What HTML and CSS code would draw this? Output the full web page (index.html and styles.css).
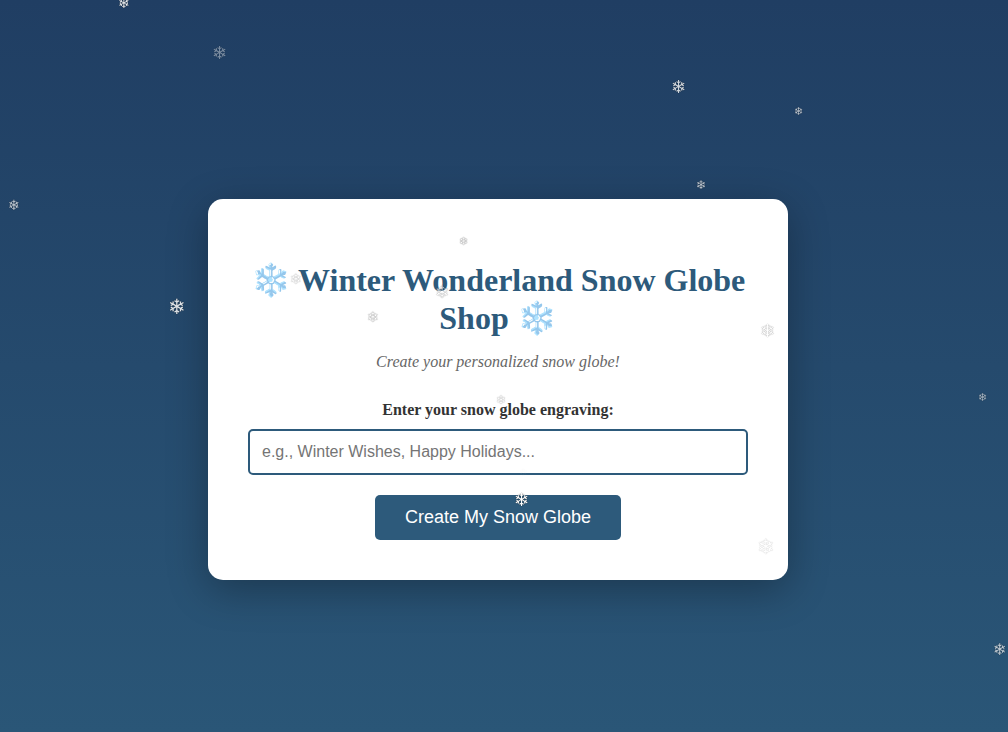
FILE: index.html
```html
<!DOCTYPE html>
<html lang="en">
<head>
<meta charset="utf-8">
<title>Winter Wonderland Snow Globe Shop</title>
<link rel="stylesheet" href="styles.css">
</head>
<body>
<main class="card">
<h1 class="title">❄️ Winter Wonderland Snow Globe Shop ❄️</h1>
<p class="subtitle">Create your personalized snow globe!</p>
<form class="form">
<label class="label" for="engraving">Enter your snow globe engraving:</label>
<input class="input" id="engraving" type="text" placeholder="e.g., Winter Wishes, Happy Holidays...">
<button class="button" type="button">Create My Snow Globe</button>
</form>
</main>
<div class="snow" aria-hidden="true">
<span class="flake" style="left:124px;top:4px;font-size:14px;opacity:.9">❄</span>
<span class="flake" style="left:219px;top:53px;font-size:18px;opacity:.4">❄</span>
<span class="flake" style="left:678px;top:87px;font-size:18px;opacity:.8">❄</span>
<span class="flake" style="left:798px;top:111px;font-size:11px;opacity:.7">❄</span>
<span class="flake" style="left:701px;top:185px;font-size:12px;opacity:.7">❄</span>
<span class="flake" style="left:14px;top:206px;font-size:14px;opacity:.7">❄</span>
<span class="flake" style="left:177px;top:307px;font-size:21px;opacity:.85">❄</span>
<span class="flake" style="left:463px;top:241px;font-size:11px;opacity:.8">❄</span>
<span class="flake" style="left:296px;top:280px;font-size:14px;opacity:.5">❄</span>
<span class="flake" style="left:373px;top:318px;font-size:14px;opacity:.7">❄</span>
<span class="flake" style="left:442px;top:292px;font-size:17px;opacity:.6">❄</span>
<span class="flake" style="left:767px;top:331px;font-size:18px;opacity:.6">❄</span>
<span class="flake" style="left:501px;top:400px;font-size:12px;opacity:.5">❄</span>
<span class="flake" style="left:523px;top:473px;font-size:10px;opacity:.05">❄</span>
<span class="flake" style="left:521px;top:500px;font-size:18px;opacity:1">❄</span>
<span class="flake" style="left:766px;top:547px;font-size:21px;opacity:.3">❄</span>
<span class="flake" style="left:982px;top:397px;font-size:11px;opacity:.6">❄</span>
<span class="flake" style="left:999px;top:650px;font-size:16px;opacity:.7">❄</span>
</div>
</body>
</html>
```
FILE: styles.css
```css
* { box-sizing: border-box; }
body {
  margin: 0;
  min-height: 100vh;
  padding: 67px 32px 20px 20px;
  display: flex;
  align-items: center;
  justify-content: center;
  background: linear-gradient(to bottom, #203e63, #2a5677);
  color: #333;
  font-family: Georgia, "Liberation Serif", serif;
}
.card {
  width: 100%;
  max-width: 580px;
  padding: 40px;
  border-radius: 15px;
  background: #fff;
  text-align: center;
  box-shadow: 0 10px 40px rgba(0, 0, 0, 0.3);
}
.title { margin: 22px 0 16px; font-size: 32px; color: #2d5a7b; }
.subtitle { margin: 0 0 30px; font-style: italic; color: #666; }
.form { display: flex; flex-direction: column; align-items: center; }
.label { margin-bottom: 10px; font-weight: bold; }
.input { width: 100%; padding: 12px; border: 2px solid #2d5a7b; border-radius: 5px; font: 16px "Liberation Sans", sans-serif; }
.button { margin-top: 20px; padding: 12px 30px; border: 0; border-radius: 5px; background: #2d5a7b; color: #fff; font: 18px "Liberation Sans", sans-serif; }
.snow { position: fixed; inset: 0; overflow: hidden; pointer-events: none; }
.flake { position: absolute; line-height: 1; color: #fff; text-shadow: 0 0 1px #000; transform: translate(-50%, -50%); }
```
